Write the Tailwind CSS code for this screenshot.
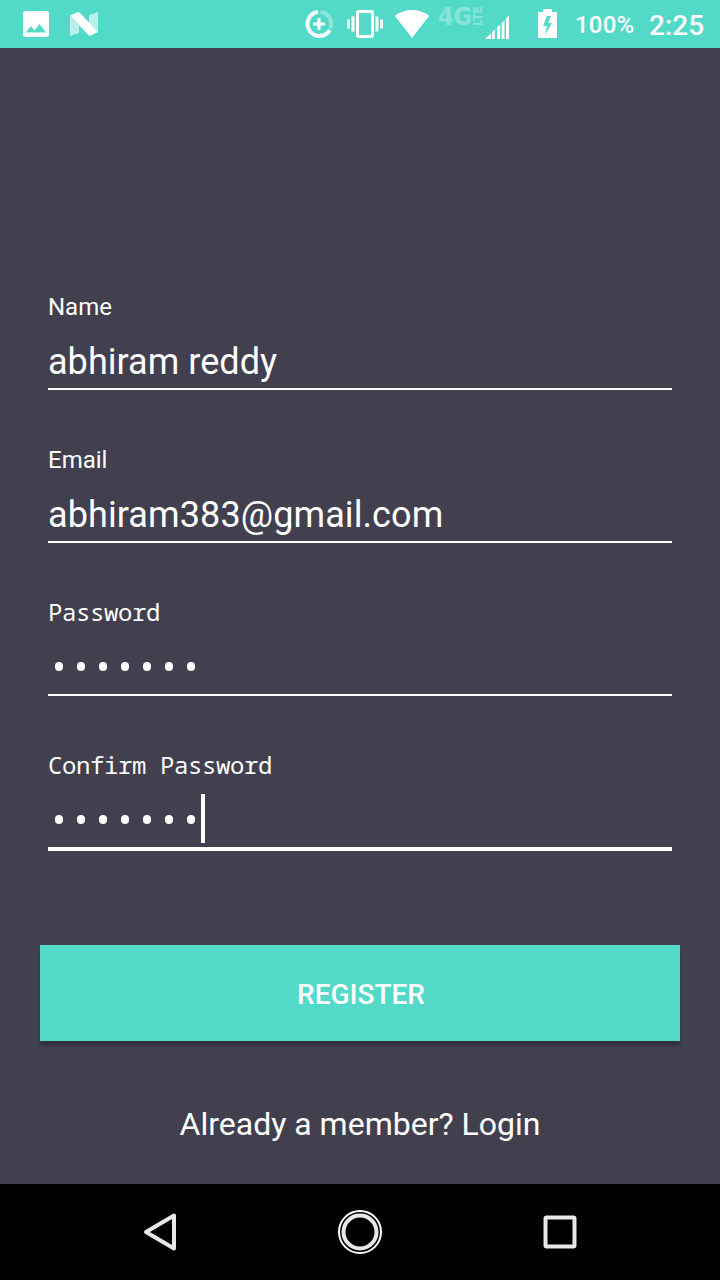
<!DOCTYPE html>
<html lang="en">
<head>
<meta charset="utf-8">
<title>Register</title>
<script src="https://cdn.jsdelivr.net/npm/@tailwindcss/browser@4"></script>
</head>
<body class="w-[720px] h-[1280px] overflow-hidden flex flex-col bg-[#423f4f] text-white font-['Roboto',sans-serif]">
<header class="h-12 shrink-0 flex bg-[#52d9c8]">
  <svg class="ml-5 w-20 h-12" viewBox="20 0 80 48" fill="#fff">
    <path fill-rule="evenodd" d="M26 11H46Q49 11 49 14V34Q49 37 46 37H26Q23 37 23 34V14Q23 11 26 11ZM26 32.500H46L39.500 24L34.500 30.500L31 26Z"/>
    <path opacity=".6" d="M70 16L79 25V33L70 36ZM98 12V32L89 23V15Z"/>
    <path d="M70 15.500L78 12Q79.500 12 80.500 13.500L98 32L91 35.500Q89.500 36 88 34.500Z"/>
  </svg>
  <svg class="ml-[200px] w-[132px] h-12" viewBox="300 0 132 48" fill="none" stroke="#fff">
    <path stroke-width="4" d="M318 12A12 12 0 1 0 329.800 30"/>
    <path stroke-width="4" opacity=".35" d="M320.500 12A12 12 0 0 1 330.300 28.500"/>
    <path stroke-width="3" d="M319 18V30M313 24H325"/>
    <rect x="357.500" y="11.500" width="15" height="25" rx="1.500" stroke-width="3"/>
    <path stroke-width="3" d="M353 16.500V31.500M377 16.500V31.500"/>
    <path stroke-width="3" d="M348.500 19.500V28.500M381.500 19.500V28.500"/>
    <path fill="#fff" stroke="none" d="M394.800 15.800Q402.500 10 412 10Q421.500 10 429.200 15.800L412 38Z"/>
  </svg>
  <svg class="w-[132px] h-12" viewBox="432 0 132 48" fill="#fff">
    <g opacity=".3" class="font-['DejaVu_Sans',sans-serif] font-bold">
      <text x="438" y="25" class="text-[24.5px]" textLength="34" lengthAdjust="spacingAndGlyphs">4G</text>
      <text transform="translate(482 26) rotate(-90)" class="text-[12px]" textLength="20" lengthAdjust="spacingAndGlyphs">LTE</text>
    </g>
    <path d="M485 39L491 33.200V39ZM492 32L494.800 29.300V39H492ZM497 27.500L500.200 24.300V39H497ZM501.700 23L504.500 20.200V39H501.700ZM506 18.600L509 15.300V39H506Z"/>
    <path fill-rule="evenodd" d="M543 9H552V12H557V38H538V12H543ZM547 16L543 26H547L545 35L552 23H548L551 16Z"/>
  </svg>
  <span class="ml-[11px] w-[62px] text-[24px] leading-[50px] font-medium whitespace-nowrap tracking-[0.2px]">100%</span>
  <span class="ml-3 text-[28px] leading-[52px] font-medium whitespace-nowrap">2:25</span>
</header>
<main class="h-[1136px] shrink-0 px-10 pt-[245px] flex flex-col">
  <form class="px-2 flex flex-col">
    <div class="h-[153px]">
      <label class="block h-7 text-[24px] leading-[28px]">Name</label>
      <div class="mt-3 h-[57px] border-b-2 border-white text-[36px] leading-[59px] tracking-[0.04px]">abhiram reddy</div>
    </div>
    <div class="h-[153px]">
      <label class="block h-7 text-[24px] leading-[28px]">Email</label>
      <div class="mt-3 h-[57px] border-b-2 border-white text-[36px] leading-[59px] tracking-[0.1px]">abhiram383@gmail.com</div>
    </div>
    <div class="h-[153px]">
      <label class="block h-7 text-[24px] leading-[26px] font-['Noto_Sans_Mono','DejaVu_Sans_Mono',monospace] tracking-[-0.4px]">Password</label>
      <div class="mt-3 h-[57px] border-b-2 border-white flex items-start gap-[14px] pl-[7px] pt-[23px]">
        <i class="w-2 h-[9px] rounded-[4px] bg-white"></i><i class="w-2 h-[9px] rounded-[4px] bg-white"></i><i class="w-2 h-[9px] rounded-[4px] bg-white"></i><i class="w-2 h-[9px] rounded-[4px] bg-white"></i><i class="w-2 h-[9px] rounded-[4px] bg-white"></i><i class="w-2 h-[9px] rounded-[4px] bg-white"></i><i class="w-2 h-[9px] rounded-[4px] bg-white"></i>
      </div>
    </div>
    <div class="h-[153px]">
      <label class="block h-7 text-[24px] leading-[26px] font-['Noto_Sans_Mono','DejaVu_Sans_Mono',monospace] tracking-[-0.4px]">Confirm Password</label>
      <div class="mt-3 h-[59px] border-b-4 border-white flex items-start">
        <div class="flex gap-[14px] pl-[7px] pt-[23px]">
          <i class="w-2 h-[9px] rounded-[4px] bg-white"></i><i class="w-2 h-[9px] rounded-[4px] bg-white"></i><i class="w-2 h-[9px] rounded-[4px] bg-white"></i><i class="w-2 h-[9px] rounded-[4px] bg-white"></i><i class="w-2 h-[9px] rounded-[4px] bg-white"></i><i class="w-2 h-[9px] rounded-[4px] bg-white"></i><i class="w-2 h-[9px] rounded-[4px] bg-white"></i>
        </div>
        <div class="ml-[6px] mt-[2px] w-1 h-[49px] bg-white"></div>
      </div>
    </div>
  </form>
  <button class="mt-10 h-24 shrink-0 bg-[#52d9c8] text-[28px] font-medium pt-1 pl-[2px] shadow-[0_4px_3px_rgba(0,0,0,0.24)]">REGISTER</button>
  <p class="mt-[63px] text-center text-[32px] leading-[40px]">Already a member? Login</p>
</main>
<nav class="h-24 shrink-0 bg-black flex">
  <svg class="w-[720px] h-24" viewBox="0 1184 720 96" fill="none" stroke="#e8e8e8">
    <path stroke-width="4" stroke-linejoin="round" d="M174 1215.500V1248.500L146 1232Z"/>
    <circle cx="360" cy="1232" r="21" stroke="#fff" stroke-width="2"/>
    <circle cx="360" cy="1232" r="16.500" stroke-width="4"/>
    <rect x="545.500" y="1217.500" width="29" height="29" rx="1" stroke-width="4"/>
  </svg>
</nav>
</body>
</html>
